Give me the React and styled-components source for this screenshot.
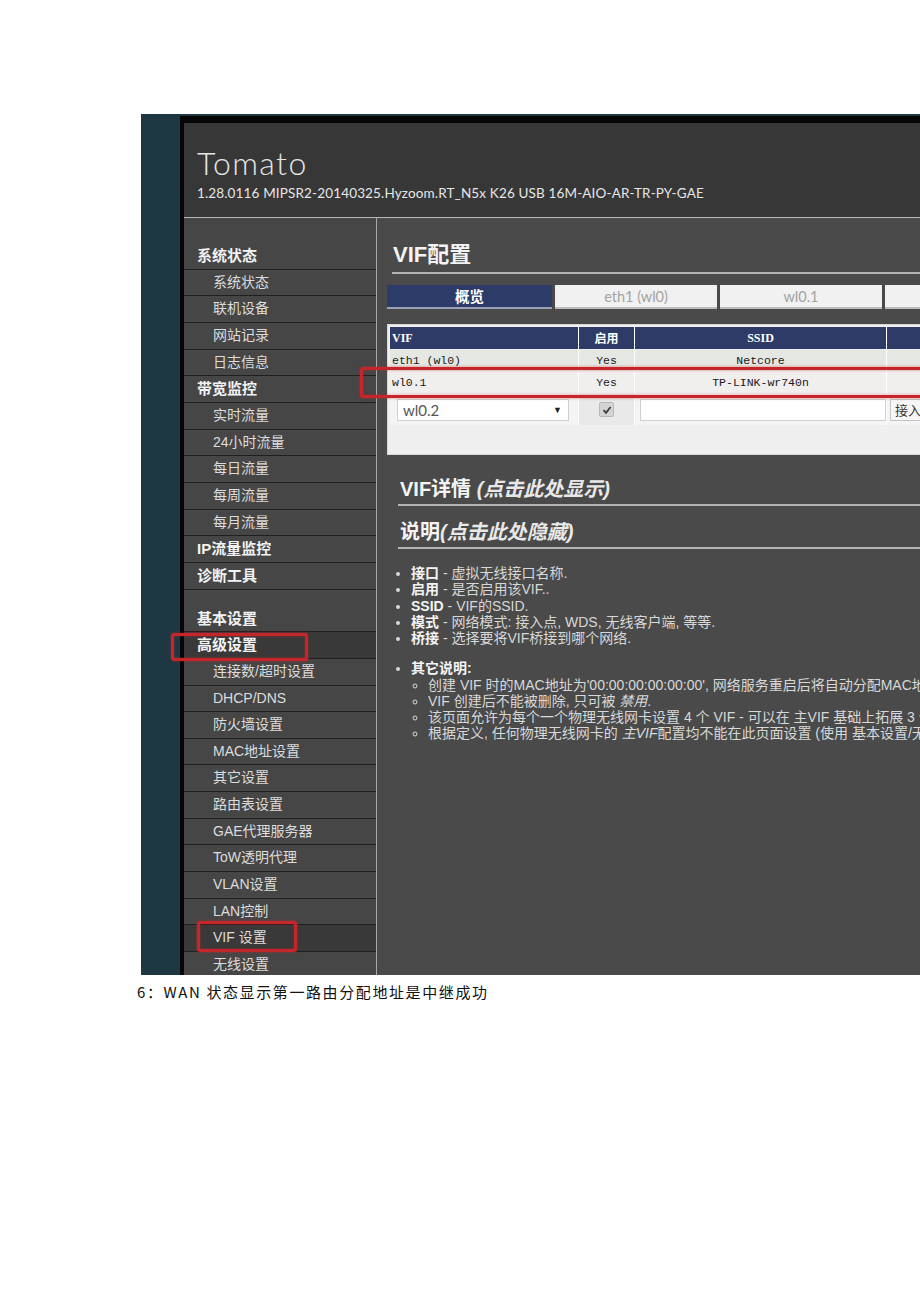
import React from "react";
import styled, { createGlobalStyle, css } from "styled-components";

const GlobalStyle = createGlobalStyle`
  body {
    margin: 0;
    background: #fff;
    font-family: "Liberation Sans", "Noto Sans CJK SC", sans-serif;
  }
`;

const Page = styled.div`
  width: 920px;
  height: 1302px;
  padding: 114px 0 0 137px;
  box-sizing: border-box;
  overflow: hidden;
`;

const Shot = styled.div`
  position: relative;
  margin-left: 4px;
  width: 779px;
  height: 861px;
  overflow: hidden;
  background: #1d3843;
`;

const Frame = styled.div`
  margin: 2px 0 0 39px;
  width: 1000px;
  height: 859px;
  box-sizing: border-box;
  border-left: 4px solid #050505;
  border-top: 7px solid #050505;
  background: #4a4a4a;
  display: flex;
  flex-direction: column;
`;

const Header = styled.header`
  height: 95px;
  flex-shrink: 0;
  box-sizing: border-box;
  background: #373737;
  border-bottom: 1px solid #b8b8b8;
  padding: 21px 0 0 13px;
  color: #e6e6e6;
`;

const Logo = styled.div`
  font-family: "Lato", "Open Sans", sans-serif;
  font-weight: 300;
  font-size: 32px;
  line-height: 38px;
  letter-spacing: 1.4px;
`;

const Version = styled.div`
  font-family: "Lato", "Open Sans", sans-serif;
  font-size: 13.5px;
  line-height: 18px;
  margin-top: 2px;
  letter-spacing: 0.15px;
`;

const Main = styled.div`
  display: flex;
  flex: 1;
  min-height: 0;
  overflow: hidden;
`;

const Sidebar = styled.nav`
  width: 192px;
  flex-shrink: 0;
  background: #464646;
  border-right: 1px solid #a8a8a8;
  padding-top: 25px;
`;

const NavItem = styled.div`
  height: 25.67px;
  line-height: 25.67px;
  border-bottom: 1px solid #1f1f1f;
  padding-left: ${(p) => (p.$head ? "13px" : "29px")};
  font-size: ${(p) => (p.$head ? "15px" : "14px")};
  font-weight: ${(p) => (p.$head ? 700 : 400)};
  color: ${(p) => (p.$head ? "#f2f2f2" : "#dcdcdc")};
  white-space: nowrap;
  ${(p) => p.$gap && css`margin-top: 16px;`}
  ${(p) => p.$active && css`background: #393939;`}
`;

const Content = styled.section`
  flex: 1;
  padding-left: 10px;
  color: #dedede;
`;

const PageTitle = styled.h2`
  margin: 20px 0 0 5px;
  height: 34px;
  line-height: 34px;
  border-bottom: 2px solid #b4b4b4;
  font-size: 22px;
  font-weight: 700;
  color: #f3f3f3;
  padding-left: 1px;
`;

const Tabs = styled.div`
  display: flex;
  gap: 3px;
  margin-top: 11px;
`;

const Tab = styled.div`
  width: ${(p) => (p.$active ? "165px" : "162px")};
  height: 24px;
  line-height: 23px;
  box-sizing: border-box;
  text-align: center;
  font-size: 14.5px;
  font-family: "Lato", "Noto Sans CJK SC", sans-serif;
  background: ${(p) => (p.$active ? "#2c3b68" : "#f1f1f1")};
  color: ${(p) => (p.$active ? "#ffffff" : "#a3a3a3")};
  font-weight: ${(p) => (p.$active ? 700 : 400)};
  border-bottom: 2px solid ${(p) => (p.$active ? "#9aa3b8" : "#bdbdbd")};
`;

const Panel = styled.div`
  margin-top: 15px;
  height: 131px;
  box-sizing: border-box;
  background: #efefef;
  border: 1px solid #d6d6d6;
  padding: 2px 0 0 2px;
`;

const Row = styled.div`
  display: grid;
  grid-template-columns: 188px 55px 251px 200px;
  column-gap: 1px;
  height: ${(p) => p.$h || 21}px;
  background: #ffffff;
  margin-bottom: 1px;
`;

const Cell = styled.div`
  display: flex;
  align-items: center;
  justify-content: ${(p) => (p.$left ? "flex-start" : "center")};
  padding-left: ${(p) => (p.$left ? "2px" : "0")};
  background: ${(p) => p.$bg || "#eeeeee"};
  color: #1a1a1a;
  font-family: "Liberation Mono", "Noto Sans CJK SC", monospace;
  font-size: 11.5px;
  white-space: pre;
`;

const HeadCell = styled(Cell)`
  background: #2e3b67;
  color: #ffffff;
  font-family: "Liberation Serif", "Noto Sans CJK SC", serif;
  font-weight: 700;
  font-size: 12px;
`;

const Select = styled.div`
  width: 172px;
  height: 22px;
  margin-left: 5px;
  box-sizing: border-box;
  background: #fff;
  border: 1px solid #cfcfcf;
  display: flex;
  align-items: center;
  justify-content: space-between;
  padding: 0 6px 0 5px;
  font-family: "Lato", sans-serif;
  font-size: 15px;
  color: #555;
  span {
    font-size: 9px;
    color: #222;
  }
`;

const Check = styled.span`
  width: 13px;
  height: 13px;
  background: #d4d4d4;
  border: 1px solid #b8b8b8;
  border-radius: 2px;
  display: flex;
  align-items: center;
  justify-content: center;
`;

const TextInput = styled.div`
  width: 247px;
  height: 22px;
  margin-left: 3px;
  box-sizing: border-box;
  background: #fff;
  border: 1px solid #cfcfcf;
`;

const Button = styled.div`
  height: 22px;
  margin-left: 1px;
  padding: 0 8px 0 4px;
  box-sizing: border-box;
  background: #f6f6f6;
  border: 1px solid #c4c4c4;
  font-size: 13px;
  line-height: 20px;
  color: #333;
  font-family: "Noto Sans CJK SC", sans-serif;
`;

const Section = styled.h3`
  margin: ${(p) => p.$mt}px 0 0 11px;
  height: 29px;
  line-height: 29px;
  padding-left: 2px;
  border-bottom: 2px solid #b4b4b4;
  font-size: 20px;
  font-weight: 700;
  color: #f5f5f5;
  white-space: nowrap;
  em {
    font-weight: 700;
    color: #e8e8e8;
  }
`;

const List = styled.ul`
  margin: ${(p) => p.$mt || 0}px 0 0 0;
  padding-left: ${(p) => p.$pl}px;
  list-style: ${(p) => p.$type};
  font-size: 14px;
  line-height: 16.25px;
  color: #d8d8d8;
  white-space: nowrap;
  b {
    color: #f4f4f4;
  }
`;

const Item = styled.li`
  ${(p) => p.$mt && css`margin-top: ${p.$mt}px;`}
`;

const Caption = styled.p`
  margin: 8px 0 0 0;
  font-family: "Noto Sans CJK SC", sans-serif;
  font-size: 15px;
  line-height: 18px;
  letter-spacing: 1.6px;
  color: #111;
`;

const Mark = styled.div`
  position: absolute;
  left: ${(p) => p.$x}px;
  top: ${(p) => p.$y}px;
  width: ${(p) => p.$w}px;
  height: ${(p) => p.$h}px;
  box-sizing: border-box;
  border: 3px solid #c4262c;
  border-radius: 3px;
  box-shadow: 0 0 3px rgba(210, 40, 40, 0.6), inset 0 0 3px rgba(210, 40, 40, 0.5);
  pointer-events: none;
`;

const nav = [
  { t: "系统状态", h: 1 },
  { t: "系统状态" },
  { t: "联机设备" },
  { t: "网站记录" },
  { t: "日志信息" },
  { t: "带宽监控", h: 1 },
  { t: "实时流量" },
  { t: "24小时流量" },
  { t: "每日流量" },
  { t: "每周流量" },
  { t: "每月流量" },
  { t: "IP流量监控", h: 1 },
  { t: "诊断工具", h: 1 },
  { t: "基本设置", h: 1, gap: 1 },
  { t: "高级设置", h: 1, active: 1 },
  { t: "连接数/超时设置" },
  { t: "DHCP/DNS" },
  { t: "防火墙设置" },
  { t: "MAC地址设置" },
  { t: "其它设置" },
  { t: "路由表设置" },
  { t: "GAE代理服务器" },
  { t: "ToW透明代理" },
  { t: "VLAN设置" },
  { t: "LAN控制" },
  { t: "VIF 设置", active: 1 },
  { t: "无线设置" },
];

const tabs = ["概览", "eth1 (wl0)", "wl0.1", "wl0.2"];

export default function App() {
  return (
    <Page>
      <GlobalStyle />
      <Shot>
        <Frame>
          <Header>
            <Logo>Tomato</Logo>
            <Version>1.28.0116 MIPSR2-20140325.Hyzoom.RT_N5x K26 USB 16M-AIO-AR-TR-PY-GAE</Version>
          </Header>
          <Main>
            <Sidebar>
              {nav.map((n, i) => (
                <NavItem key={i} $head={n.h} $gap={n.gap} $active={n.active}>
                  {n.t}
                </NavItem>
              ))}
            </Sidebar>
            <Content>
              <PageTitle>VIF配置</PageTitle>
              <Tabs>
                {tabs.map((t, i) => (
                  <Tab key={t} $active={i === 0}>{t}</Tab>
                ))}
              </Tabs>
              <Panel>
                <Row $h={22}>
                  <HeadCell $left>VIF</HeadCell>
                  <HeadCell>启用</HeadCell>
                  <HeadCell>SSID</HeadCell>
                  <HeadCell>模式</HeadCell>
                </Row>
                <Row>
                  <Cell $left $bg="#e5e8e2">eth1 (wl0)</Cell>
                  <Cell $bg="#e5e8e2">Yes</Cell>
                  <Cell $bg="#e5e8e2">Netcore</Cell>
                  <Cell $bg="#e5e8e2">接入点</Cell>
                </Row>
                <Row>
                  <Cell $left $bg="#f1eeee">wl0.1</Cell>
                  <Cell $bg="#f1eeee">Yes</Cell>
                  <Cell $bg="#f1eeee">TP-LINK-wr740n</Cell>
                  <Cell $bg="#f1eeee">无线客户端</Cell>
                </Row>
                <Row $h={31}>
                  <Cell $bg="#f4f4f4" $left>
                    <Select>
                      wl0.2<span>▼</span>
                    </Select>
                  </Cell>
                  <Cell $bg="#e9e9e9">
                    <Check>
                      <svg width="10" height="10" viewBox="0 0 10 10">
                        <path d="M1.5 5.2 L4 7.8 L8.6 2" fill="none" stroke="#3a3a3a" strokeWidth="1.8" />
                      </svg>
                    </Check>
                  </Cell>
                  <Cell $bg="#f4f4f4" $left>
                    <TextInput />
                  </Cell>
                  <Cell $bg="#f4f4f4" $left>
                    <Button>接入点</Button>
                  </Cell>
                </Row>
              </Panel>
              <Section $mt={20}>
                VIF详情 <em>(点击此处显示)</em>
              </Section>
              <Section $mt={12}>
                说明<em>(点击此处隐藏)</em>
              </Section>
              <List $mt={16} $pl={24} $type="disc">
                <Item><b>接口</b> - 虚拟无线接口名称.</Item>
                <Item><b>启用</b> - 是否启用该VIF..</Item>
                <Item><b>SSID</b> - VIF的SSID.</Item>
                <Item><b>模式</b> - 网络模式: 接入点, WDS, 无线客户端, 等等.</Item>
                <Item><b>桥接</b> - 选择要将VIF桥接到哪个网络.</Item>
                <Item $mt={14}>
                  <b>其它说明:</b>
                  <List $pl={17} $type="circle">
                    <li>创建 VIF 时的MAC地址为'00:00:00:00:00:00', 网络服务重启后将自动分配MAC地址.</li>
                    <li>VIF 创建后不能被删除, 只可被 <i>禁用</i>.</li>
                    <li>该页面允许为每个一个物理无线网卡设置 4 个 VIF - 可以在 主VIF 基础上拓展 3 个虚拟接口.</li>
                    <li>根据定义, 任何物理无线网卡的 <i>主VIF</i>配置均不能在此页面设置 (使用 基本设置/无线设置).</li>
                  </List>
                </Item>
              </List>
            </Content>
          </Main>
        </Frame>
        <Mark $x={219} $y={253} $w={600} $h={31} />
        <Mark $x={30} $y={519} $w={137} $h={28} />
        <Mark $x={56} $y={807} $w={100} $h={31} />
      </Shot>
      <Caption>6：WAN 状态显示第一路由分配地址是中继成功</Caption>
    </Page>
  );
}
